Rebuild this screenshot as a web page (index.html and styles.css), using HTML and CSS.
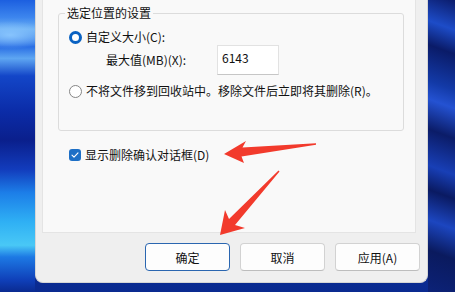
FILE: index.html
```html
<!DOCTYPE html>
<html lang="zh-CN">
<head>
<meta charset="utf-8">
<link rel="stylesheet" href="styles.css">
</head>
<body>
<div class="dialog">
  <div class="panel">
    <div class="group">
      <span class="legend">选定位置的设置</span>
      <div class="row r1"><span class="radio on"></span><span>自定义大小(C):</span></div>
      <div class="row r2"><span class="maxlabel">最大值(MB)(X):</span><div class="input">6143</div></div>
      <div class="row r3"><span class="radio"></span><span>不将文件移到回收站中。移除文件后立即将其删除(R)。</span></div>
    </div>
    <div class="row check-row">
      <span class="check"><svg width="12" height="12" viewBox="0 0 12 12"><path d="M3 6.2 L5 8.2 L9 3.8" fill="none" stroke="#fff" stroke-width="1.1" stroke-linecap="round" stroke-linejoin="round"/></svg></span>
      <span>显示删除确认对话框(D)</span>
    </div>
  </div>
  <div class="footer">
    <button class="btn default">确定</button>
    <button class="btn">取消</button>
    <button class="btn">应用(A)</button>
  </div>
</div>
<svg class="arrows" width="455" height="292" viewBox="0 0 455 292">
  <polygon fill="#f23a2c" points="224,154 246,141 242.5,147.5 316,143.2 316,144.8 241.5,156.5 244,163"/>
  <polygon fill="#f23a2c" points="220,235 225,210 229,219 278.5,170.5 279.5,171.5 235,225 245,228"/>
</svg>
</body>
</html>
```
FILE: styles.css
```css
html, body {
  margin: 0;
  padding: 0;
}
body {
  width: 455px;
  height: 292px;
  overflow: hidden;
  position: relative;
  font-family: "Noto Sans CJK SC", "Noto Sans", sans-serif;
  font-size: 12px;
  color: #111;
  background:
    radial-gradient(ellipse 40px 14px at 10px 35px, rgba(140, 200, 255, 0.9), rgba(140, 200, 255, 0) 100%) no-repeat,
    linear-gradient(180deg, #1c5fe0 0%, #3d86ee 6%, #6fb2f4 10%, #2a6ee4 16%, #5ea6f2 20%, #1346c8 26%, #0b2ca8 38%, #0a1f8c 48%, #123cbc 58%, #1c7ee8 66%, #2fb0f4 76%, #49c8f6 84%, #1d79e4 88%, #0f3fb8 96%, #0a2a90 100%) left top / 35px 100% no-repeat,
    linear-gradient(200deg, #0b1c6c 0%, #1d4cc8 10%, #0a1b68 18%, #133aa8 30%, #2452d2 36%, #0b1c68 46%, #183fb6 58%, #0a1a62 66%, #1c46c0 76%, #0a1a5e 86%, #0c2278 100%) right top / 27px 100% no-repeat,
    linear-gradient(180deg, #1a4fc8, #0a2a90);
}
.dialog {
  position: absolute;
  left: 35px;
  top: -2px;
  width: 391px;
  height: 284px;
  background: #efefef;
  border: 1px solid #d6d6d6;
  border-top: none;
  border-radius: 0 0 8px 8px;
  display: flex;
  flex-direction: column;
}
.panel {
  margin-left: 6px;
  width: 374px;
  height: 235px;
  background: #f9f9f9;
  border: 1px solid #e4e4e4;
  border-top: none;
  box-sizing: border-box;
  display: flex;
  flex-direction: column;
}
.group {
  position: relative;
  margin: 15px 0 0 15px;
  width: 346px;
  height: 118px;
  box-sizing: border-box;
  border: 1px solid #dcdcdc;
  border-radius: 3px;
  padding: 16px 0 0 10px;
}
.legend {
  position: absolute;
  top: -9px;
  left: 6px;
  padding: 0 2px;
  background: #f9f9f9;
  line-height: 16px;
}
.row {
  display: flex;
  align-items: center;
  gap: 4px;
  line-height: 14px;
  height: 14px;
  white-space: nowrap;
}
.r2 {
  height: 30px;
  margin-top: 1px;
}
.r3 {
  margin-top: 9px;
}
.radio {
  width: 13px;
  height: 13px;
  box-sizing: border-box;
  border-radius: 50%;
  border: 1px solid #858585;
  background: #fff;
  flex: none;
}
.radio.on {
  border: 3.5px solid #0a62c2;
  background: #fff;
}
.maxlabel {
  margin-left: 37px;
  width: 107px;
}
.input {
  width: 62px;
  height: 30px;
  box-sizing: border-box;
  background: #fff;
  border: 1px solid #e2e2e2;
  border-bottom: 1px solid #c6c6c6;
  padding: 5px 0 0 4px;
  line-height: 14px;
  color: #111;
}
.check-row {
  margin: 17px 0 0 26px;
}
.check {
  width: 12px;
  height: 12px;
  border-radius: 3px;
  background: #1d6fc6;
  flex: none;
  display: flex;
}
.footer {
  display: flex;
  justify-content: flex-end;
  gap: 10px;
  padding: 10px 7px 0 0;
}
.btn {
  width: 85px;
  height: 28px;
  box-sizing: border-box;
  font-family: inherit;
  font-size: 12px;
  color: #111;
  background: #fdfdfd;
  border: 1px solid #d2d2d2;
  border-bottom-color: #bdbdbd;
  border-radius: 4px;
  padding: 0;
}
.btn.default {
  border: 1px solid #2a66b0;
}
.arrows {
  position: absolute;
  left: 0;
  top: 0;
}
```
